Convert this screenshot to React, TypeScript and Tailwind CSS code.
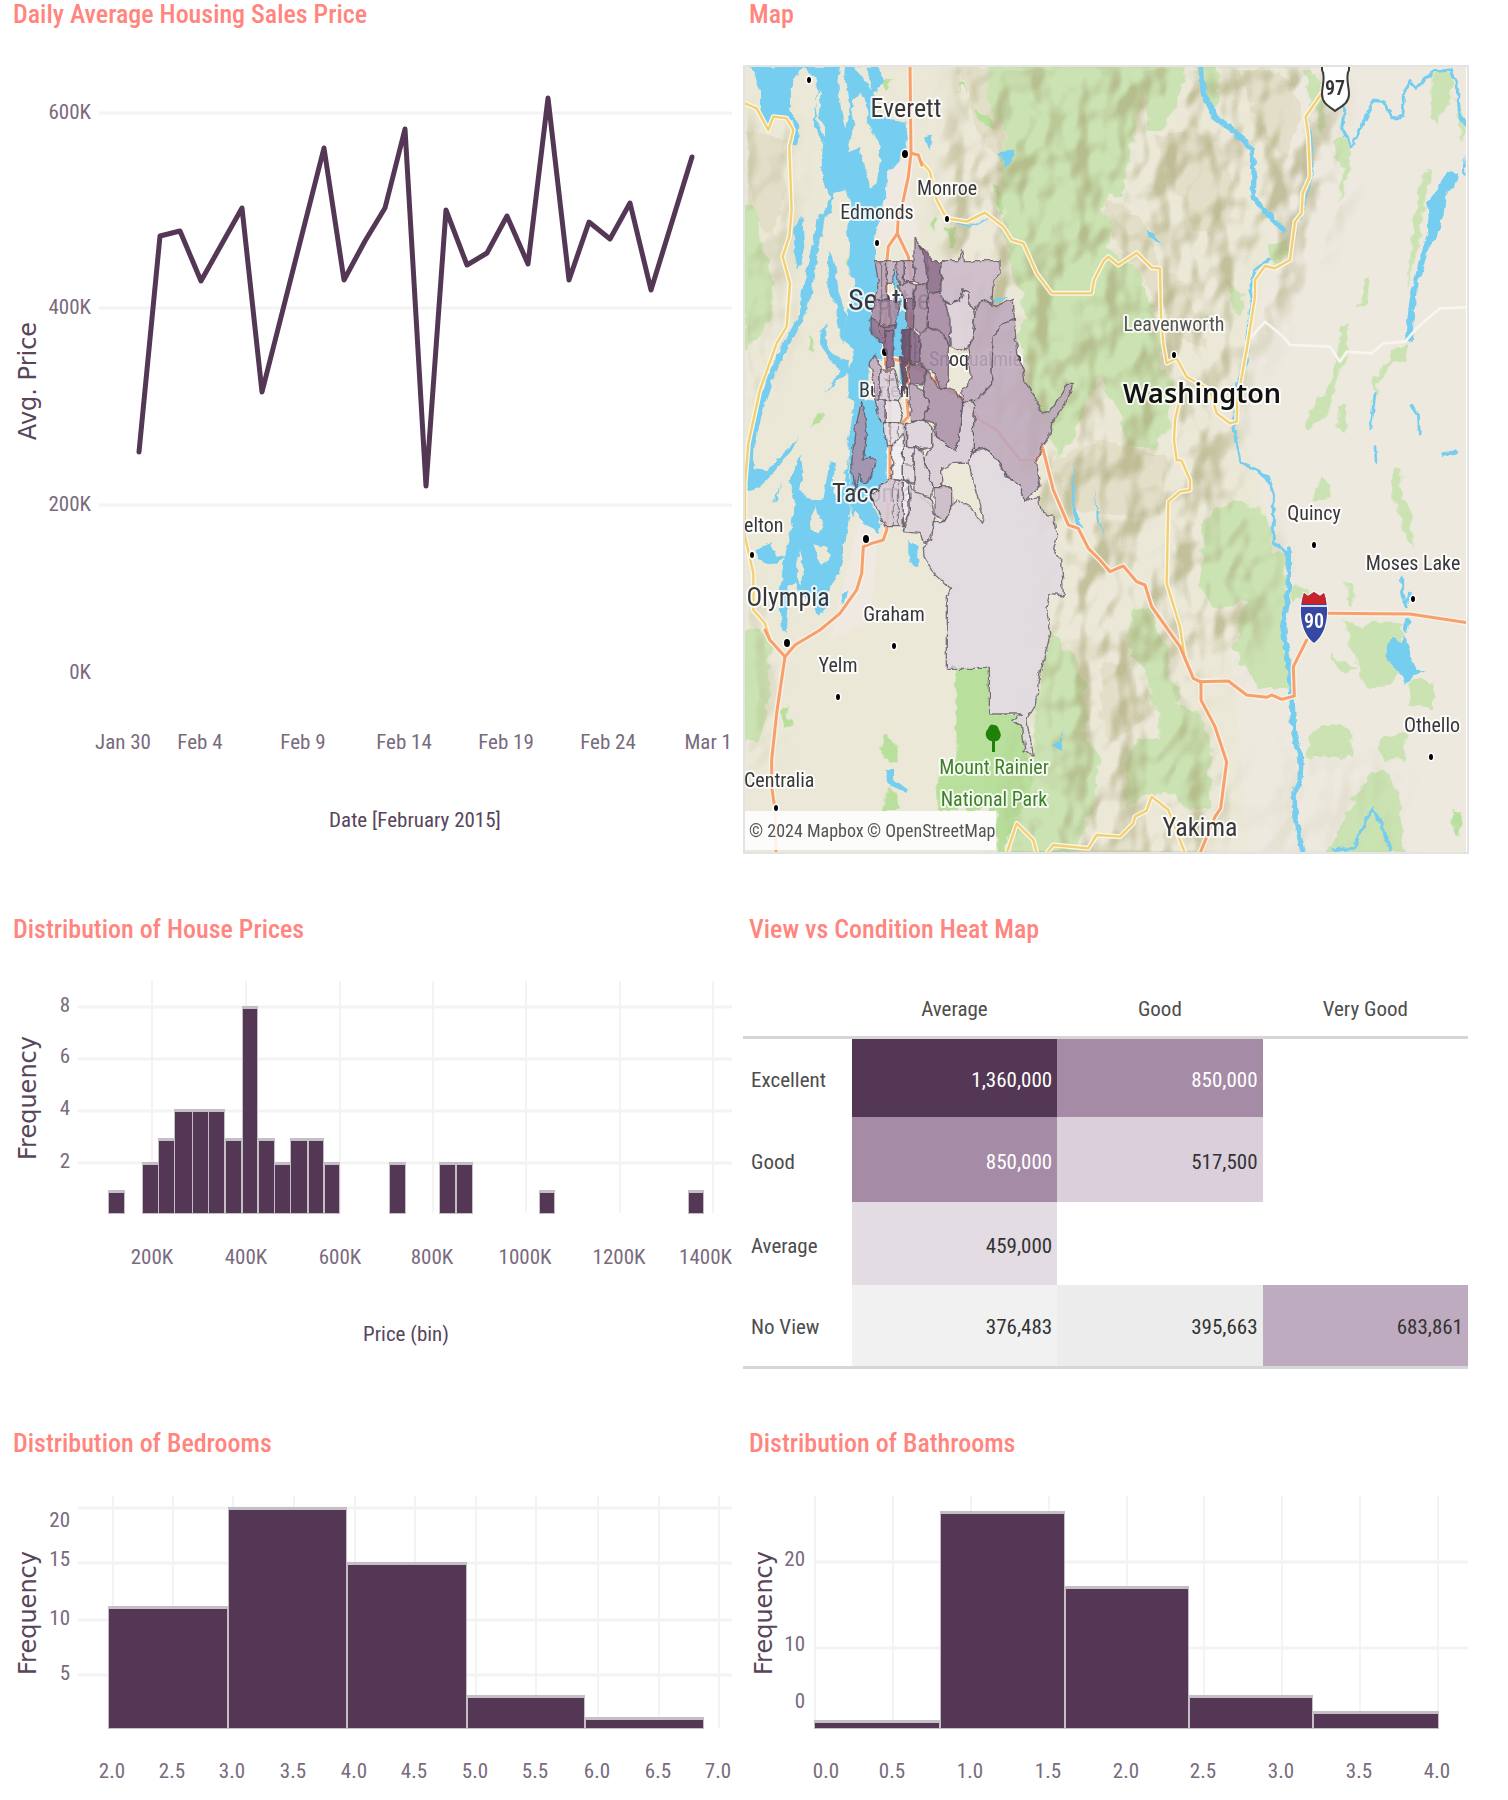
import type { ReactNode } from "react";

const LABEL = "#796a7e";
const INK = "#57465b";
const BAR = "#543754";

type Tick = { at: number; text: string; end?: boolean };

function Panel({ title, right, children }: { title: string; right?: boolean; children: ReactNode }) {
  return (
    <section className={right ? "min-w-0 pl-2" : "min-w-0 pl-0"}>
      <h2
        className={
          right
            ? "h-9 pl-[6px] text-[26px] leading-7 font-medium text-[#ff857e]"
            : "h-9 pl-[13px] text-[26px] leading-7 font-medium text-[#ff857e]"
        }
      >
        {title}
      </h2>
      {children}
    </section>
  );
}

function YTicks({ ticks, x }: { ticks: Tick[]; x: number }) {
  return (
    <g fill={LABEL} fontSize={21} textAnchor="end">
      {ticks.map((t) => (
        <text key={t.text} x={x} y={t.at + 8}>
          {t.text}
        </text>
      ))}
    </g>
  );
}

function XTicks({ ticks, y }: { ticks: Tick[]; y: number }) {
  return (
    <g fill={LABEL} fontSize={21}>
      {ticks.map((t) => (
        <text key={t.text} x={t.at} y={y + 8} textAnchor={t.end ? "end" : "middle"}>
          {t.text}
        </text>
      ))}
    </g>
  );
}

function AxisName({ x, y, text }: { x: number; y: number; text: string }) {
  return (
    <text
      transform={`translate(${x} ${y}) rotate(-90)`}
      textAnchor="middle"
      fill={INK}
      fontSize={24}
      fontFamily='"DejaVu Sans", sans-serif'
    >
      {text}
    </text>
  );
}

function Grid({ xs, ys, x0, x1, y0, y1 }: { xs: number[]; ys: number[]; x0: number; x1: number; y0: number; y1: number }) {
  return (
    <g stroke="#f3f3f3">
      {xs.map((x) => (
        <line key={`x${x}`} x1={x} x2={x} y1={y0} y2={y1} strokeWidth={2} />
      ))}
      {ys.map((y) => (
        <line key={`y${y}`} x1={x0} x2={x1} y1={y} y2={y} strokeWidth={3} />
      ))}
    </g>
  );
}

function Bars({ bars, base }: { bars: [number, number, number][]; base: number }) {
  return (
    <g>
      {bars.map(([x0, x1, top]) => (
        <g key={x0}>
          <rect x={x0} y={top} width={x1 - x0} height={base - top} fill="#c4bfc4" />
          <rect x={x0 + 1} y={top + 3} width={x1 - x0 - 2} height={base - top - 4} fill={BAR} />
        </g>
      ))}
    </g>
  );
}

const PRICE_LINE =
  "139,452 160,236 180,231 201,281 242,208 262,392 324,148 344,280 365,241 385,208 405,129 426,486 446,210 467,265 487,253 507,216 528,264 548,98 569,280 589,222 610,239 630,203 651,290 692,157";

function DailyPrice() {
  return (
    <svg viewBox="0 36 735 879" className="block h-auto w-full" role="img" aria-label="Average price by day">
      <Grid xs={[]} ys={[113, 308, 505]} x0={99} x1={732} y0={66} y1={700} />
      <polyline points={PRICE_LINE} fill="none" stroke={BAR} strokeWidth={5} strokeLinejoin="round" strokeLinecap="round" />
      <YTicks
        x={91}
        ticks={[
          { at: 111, text: "600K" },
          { at: 306, text: "400K" },
          { at: 503, text: "200K" },
          { at: 671, text: "0K" },
        ]}
      />
      <XTicks
        y={741}
        ticks={[
          { at: 123, text: "Jan 30" },
          { at: 200, text: "Feb 4" },
          { at: 303, text: "Feb 9" },
          { at: 404, text: "Feb 14" },
          { at: 506, text: "Feb 19" },
          { at: 608, text: "Feb 24" },
          { at: 732, text: "Mar 1", end: true },
        ]}
      />
      <text x={415} y={827} textAnchor="middle" fontSize={21} fill={INK}>
        Date [February 2015]
      </text>
      <AxisName x={36} y={381} text="Avg. Price" />
    </svg>
  );
}

function HousePrices() {
  const bars: [number, number, number][] = [
    [108, 125, 1190], [142, 159, 1162], [158, 175, 1138], [174, 193, 1109], [192, 209, 1109], [208, 225, 1109],
    [225, 242, 1138], [242, 258, 1006], [258, 275, 1138], [274, 291, 1162], [290, 308, 1138], [308, 324, 1138],
    [324, 340, 1162], [389, 406, 1162], [439, 456, 1162], [456, 473, 1162], [539, 555, 1190], [688, 704, 1190],
  ];
  return (
    <svg viewBox="0 951 735 478" className="block h-auto w-full" role="img" aria-label="Histogram of house prices">
      <Grid xs={[152, 246, 340, 433, 526, 620, 713]} ys={[1007, 1059, 1111, 1163]} x0={78} x1={732} y0={981} y1={1213} />
      <Bars bars={bars} base={1214} />
      <YTicks x={70} ticks={[{ at: 1004, text: "8" }, { at: 1055, text: "6" }, { at: 1107, text: "4" }, { at: 1160, text: "2" }]} />
      <XTicks
        y={1256}
        ticks={[
          { at: 152, text: "200K" },
          { at: 246, text: "400K" },
          { at: 340, text: "600K" },
          { at: 432, text: "800K" },
          { at: 525, text: "1000K" },
          { at: 619, text: "1200K" },
          { at: 732, text: "1400K", end: true },
        ]}
      />
      <text x={406} y={1341} textAnchor="middle" fontSize={21} fill={INK}>
        Price (bin)
      </text>
      <AxisName x={36} y={1098} text="Frequency" />
    </svg>
  );
}

function Bedrooms() {
  const xs = [113, 173, 233, 294, 355, 415, 476, 536, 598, 659, 719];
  return (
    <svg viewBox="0 1465 735 335" className="block h-auto w-full" role="img" aria-label="Histogram of bedrooms">
      <Grid xs={xs} ys={[1508, 1563, 1620, 1675]} x0={78} x1={732} y0={1496} y1={1728} />
      <Bars
        base={1729}
        bars={[[108, 228, 1606], [228, 347, 1507], [347, 467, 1562], [467, 585, 1695], [585, 704, 1717]]}
      />
      <YTicks x={70} ticks={[{ at: 1519, text: "20" }, { at: 1558, text: "15" }, { at: 1617, text: "10" }, { at: 1672, text: "5" }]} />
      <XTicks y={1770} ticks={xs.map((x, i) => ({ at: x - 1, text: (2 + i / 2).toFixed(1) }))} />
      <AxisName x={36} y={1613} text="Frequency" />
    </svg>
  );
}

function Bathrooms() {
  const xs = [815, 893, 971, 1049, 1127, 1204, 1282, 1360, 1438];
  return (
    <svg viewBox="743 1465 727 335" className="block h-auto w-full" role="img" aria-label="Histogram of bathrooms">
      <Grid xs={xs} ys={[1562, 1648]} x0={815} x1={1468} y0={1496} y1={1728} />
      <Bars
        base={1729}
        bars={[[814, 940, 1720], [940, 1065, 1511], [1065, 1189, 1586], [1189, 1313, 1695], [1313, 1439, 1711]]}
      />
      <YTicks x={805} ticks={[{ at: 1558, text: "20" }, { at: 1643, text: "10" }, { at: 1700, text: "0" }]} />
      <XTicks y={1770} ticks={xs.map((x, i) => ({ at: i === 0 ? 826 : x - 1, text: (i / 2).toFixed(1) }))} />
      <AxisName x={772} y={1613} text="Frequency" />
    </svg>
  );
}

type Cell = { value: string; tone: string } | null;

const HEAT: { view: string; height: string; cells: Cell[] }[] = [
  {
    view: "Excellent",
    height: "h-[80px]",
    cells: [{ value: "1,360,000", tone: "bg-[#543754] text-white" }, { value: "850,000", tone: "bg-[#a58ba5] text-white" }, null],
  },
  {
    view: "Good",
    height: "h-[85px]",
    cells: [{ value: "850,000", tone: "bg-[#a58ba5] text-white" }, { value: "517,500", tone: "bg-[#dbcfdb] text-[#333]" }, null],
  },
  {
    view: "Average",
    height: "h-[83px]",
    cells: [{ value: "459,000", tone: "bg-[#e3dce3] text-[#333]" }, null, null],
  },
  {
    view: "No View",
    height: "h-[82px]",
    cells: [
      { value: "376,483", tone: "bg-[#f1f1f1] text-[#333]" },
      { value: "395,663", tone: "bg-[#ececec] text-[#333]" },
      { value: "683,861", tone: "bg-[#bfabbf] text-[#333]" },
    ],
  },
];

function HeatMap() {
  return (
    <div className="pr-[2px]">
      <table className="w-full table-fixed border-collapse text-[21px] leading-7 text-[#4d4d4d]">
        <colgroup>
          <col className="w-[15%]" />
          <col />
          <col />
          <col />
        </colgroup>
        <thead>
          <tr className="h-[86px] border-b-3 border-[#d6d6d6]">
            <td />
            {["Average", "Good", "Very Good"].map((c) => (
              <th key={c} scope="col" className="pt-8 font-normal">
                {c}
              </th>
            ))}
          </tr>
        </thead>
        <tbody className="border-b-3 border-[#d6d6d6]">
          {HEAT.map((row) => (
            <tr key={row.view} className={row.height}>
              <th scope="row" className="pt-1 pl-2 text-left font-normal">
                {row.view}
              </th>
              {row.cells.map((cell, i) =>
                cell ? (
                  <td key={i} className={`pt-1 pr-[5px] text-right ${cell.tone}`}>
                    {cell.value}
                  </td>
                ) : (
                  <td key={i} />
                ),
              )}
            </tr>
          ))}
        </tbody>
      </table>
    </div>
  );
}

/* Forest areas, in map units. */
const FOREST = [
  "750,45 1335,45 1330,110 1270,240 1230,240 1215,120 1190,200 1165,330 1150,440 1100,430 1080,480 1120,520 1100,600 1190,650 1240,780 1270,860 1260,960 1300,1000 1290,1130 1250,1190 1170,1190 1130,1080 1080,980 1050,1030 1000,1160 950,1230 930,1130 880,1100 860,960 830,850 860,800 830,700 800,600 790,480 780,330 800,250 740,150",
  "1390,1420 1440,1370 1480,1350 1520,1360 1580,1400 1600,1500 1640,1520 1640,1670 1625,1730 1650,1920 1550,1910 1480,1790 1520,1650 1420,1680 1380,1610",
  "1175,1670 1230,1670 1250,1730 1285,1790 1285,1890 1320,1910 1320,1970 1370,1980 1410,2070 1410,2270 1350,2280 1290,2230 1210,2230 1160,2280 1160,2120 1190,2070 1260,2060 1250,1990 1210,1860 1170,1820",
  "930,1740 1000,1820 1035,1890 1040,2070 1080,2120 1060,2280 1000,2415 820,2415 780,2270 880,2100 890,1950",
  "1720,2040 1760,2020 1820,2030 1840,2050 1840,2120 1700,2120",
  "1810,1710 1870,1730 1930,1710 1990,1730 1970,1870 1960,1910 1880,1910 1860,1860 1830,1770",
  "1770,1810 1850,1860 1820,1870 1770,1820",
  "2005,1890 2080,1890 2080,1980 2010,1960",
  "1970,2050 1995,2050 1995,2140 1960,2120 1930,2140 1920,2070",
  "1760,2415 1860,2210 1900,2165 1950,2170 1980,2250 1995,2415",
  "1960,1250 1980,1260 1985,1350 2010,1370 2020,1500 1990,1430 1960,1330",
  "1745,1275 1765,1310 1760,1350 1720,1350",
  "1820,1600 1835,1610 1845,1670 1830,1670",
  "1650,1610 1700,1610 1710,1640 1650,1650",
  "10,460 50,480 60,560 100,700 90,800 60,850 10,900",
  "10,1740 60,1725 95,1790 80,1870 90,1930 60,2070 10,2080",
  "1780,270 1820,270 1830,360 1795,465 1810,360",
  "1690,60 1735,80 1745,150 1760,230 1740,250 1720,170 1700,120",
  "1810,830 1825,825 1815,930 1760,1090 1700,1140 1710,1080 1780,980",
  "1800,1070 1820,1070 1820,1150 1795,1140",
  "1870,690 1890,680 1885,760 1855,775",
  "2080,60 2140,70 2130,150 2090,225 2070,180",
  "2140,130 2178,230 2170,280",
  "2040,400 2050,360 2080,350 2060,420 2040,560 2000,720 2010,620",
  "1580,590 1640,565 1650,610 1600,650",
  "1965,900 2000,880 2000,940 1960,930 1915,1000 1895,1080 1900,1000",
  "1380,50 1430,50 1440,120 1420,200 1395,150",
  "1460,690 1510,740 1505,800 1470,760",
];

const MEADOW = [
  "648,1855 748,1855 748,1992 850,1992 870,2120 880,2200 820,2330 790,2415 767,2415 767,2280 600,2280 585,2200 650,2120",
  "85,150 125,135 120,180 80,170",
  "205,850 225,870 215,910",
  "210,1140 240,1085 255,1100 220,1130",
  "640,140 665,100 685,120 660,115",
  "700,180 740,190 770,230 720,210",
  "770,400 790,450 785,490 768,460",
  "415,2090 435,2055 480,2090 460,2140 420,2100",
  "430,2280 445,2210 470,2230 475,2280",
  "125,1990 140,1960 145,2000 158,2030 135,2030",
  "435,90 455,90 450,115 435,115",
  "570,520 585,495 592,520 580,545",
  "620,535 645,540 642,598 625,598",
  "2140,2280 2160,2290 2155,2360 2142,2350",
  "320,630 340,610 340,640 325,650",
];

const RIDGES = [
  "640,50 760,50 750,150 800,260 780,330 700,230 690,120",
  "1240,260 1350,240 1450,300 1480,420 1400,560 1350,520 1300,380",
  "1080,440 1200,500 1260,640 1330,700 1400,900 1330,860 1220,700 1120,560",
  "1500,60 1620,60 1690,180 1640,330 1560,240",
  "20,240 130,270 140,420 90,560 40,500",
  "930,1240 1080,1170 1280,1220 1260,1400 1120,1400 1010,1380",
  "1090,1830 1180,1850 1220,2000 1110,2080 1080,1990",
];

const WATER = [
  "30,50 190,50 165,90 150,130 150,180 178,230 172,285 160,290 160,230 155,210 110,200 85,240 60,180 60,120",
  "190,50 420,50 430,100 400,130 410,200 500,215 500,290 470,340 445,370 440,430 420,500 405,560 405,630 415,700 390,790 400,840 430,880 430,930 400,925 385,960 385,1010 370,1050 440,1060 440,1290 405,1340 400,1370 425,1420 420,1450 380,1430 345,1380 335,1400 330,1270 325,1180 335,1110 340,1050 325,1040 325,960 345,900 310,870 320,800 345,690 325,670 330,590 320,540 335,460 320,420 280,430 275,480 255,500 245,560 225,620 215,700 200,775 183,765 185,730 205,640 225,560 250,490 270,450 250,400 245,330 250,280 225,230 225,150 235,120 225,80 205,65",
  "265,600 285,640 295,720 320,800 310,880 290,820 290,770 262,710",
  "160,540 175,500 190,510 195,580 175,660 160,600",
  "240,850 260,820 258,890 285,920 320,930 330,960 250,1030 300,970 245,890",
  "15,1250 80,1260 110,1230 170,1170 180,1155 150,1210 110,1260 60,1310 20,1325",
  "180,1210 190,1270 180,1320 210,1350 250,1350 270,1230 285,1240 280,1320 300,1360 325,1220 332,1370 320,1450 300,1570 270,1610 265,1670 235,1700 215,1650 180,1640 165,1600 120,1630 130,1540 150,1450 165,1360 150,1300",
  "50,1500 90,1480 110,1520 140,1515 110,1545 55,1530",
  "100,1355 125,1295 110,1350",
  "130,1570 150,1590 140,1750 125,1730 120,1620",
  "305,1630 325,1620 310,1680",
  "552,262 575,255 570,300 560,290",
  "770,315 820,295 825,320 795,355 790,330",
  "505,1470 535,1490 535,1550 520,1550 505,1510",
  "440,2160 465,2160 465,2190 505,2220 495,2225 440,2200",
  "935,2085 960,2075 972,2045 965,2100",
  "1000,1230 1005,1370 1028,1430 1010,1430 995,1370",
  "1065,1310 1075,1400 1092,1460 1070,1410",
  "1220,535 1268,585 1225,560",
  "2060,460 2090,420 2120,365 2155,370 2145,410 2120,430 2110,500 2090,560 2065,600 2030,720 2015,880 1995,865 2010,740 2040,620 2065,540",
  "2175,310 2180,380 2170,370",
  "1940,1795 1955,1760 1985,1780 1995,1760 2030,1860 2060,1860 2025,1875 1995,1905 1975,1860 1945,1830",
  "1995,1710 2010,1710 2000,1750 1992,1740",
  "465,660 478,665 475,720 495,745 500,830 490,980 495,1030 480,1050 478,930 450,920 460,840",
  "760,745 810,738 765,760",
];

const ISLANDS = [
  "300,50 318,50 315,90 330,180 315,235 303,180 295,100",
  "340,150 360,130 380,160 385,220 415,280 420,330 410,400 390,415 375,350 360,290 330,310 325,280 345,230 335,190",
  "340,50 380,50 395,125 370,80",
  "225,155 240,120 245,130 235,200 255,230 255,260 235,230",
  "210,1400 225,1370 250,1420 235,1450 215,1440",
  "220,1480 262,1490 268,1530 240,1545",
  "180,1500 195,1560 180,1610 168,1560",
];

const RIVERS: [string, number][] = [
  ["240,500 225,600 210,700 190,790 140,880 95,970 65,1060 35,1180 30,1290", 18],
  ["640,515 690,530 750,500", 5],
  ["1383,45 1390,130 1425,200 1480,240 1535,295 1542,360 1540,440 1570,480 1630,540", 16],
  ["1815,175 1805,235 1835,290 1870,220 1900,150 1930,155 1955,200 1988,200 1995,120 2010,95 2030,115 2080,65 2130,60 2150,100 2160,200 2178,225", 9],
  ["1705,210 1715,280 1715,390 1690,470 1680,510", 5],
  ["1585,630 1545,660 1530,720 1538,750 1525,850 1518,940 1490,1000 1482,1130 1488,1180 1500,1235 1580,1280 1600,1330 1600,1480 1645,1510 1645,1620 1628,1730 1650,1870", 9],
  ["1645,1500 1645,1620 1628,1730 1650,1870 1655,1930 1662,2050 1683,2130 1680,2190 1662,2230 1665,2300 1690,2410", 16],
  ["1905,1030 1892,1140", 8],
  ["2015,1065 2035,1095 2038,1150", 8],
  ["1905,1190 1908,1235", 8],
  ["2110,1215 2145,1205", 12],
  ["1780,2400 1840,2395 1895,2275 1925,2320 1950,2400", 10],
  ["1985,1580 1985,1630 2000,1670 2005,1630", 9],
];

const HIGHWAYS = [
  "10,158 50,175 85,240 100,200 140,205 160,240 148,290 152,400 155,480 148,560 128,620 150,700 140,830 110,880 60,1020 25,1180 15,1300 15,1460 40,1570 40,1680 75,1720 90,1770",
  "540,330 570,365 590,450 620,505 680,515 735,488 790,530 815,570 850,580 890,670 935,730 1055,730 1062,690 1090,635 1105,620 1135,645 1190,608 1235,653 1260,655 1263,800 1270,880 1280,940 1310,925 1340,980 1410,1020 1430,1090 1470,1120 1490,1115 1492,1050 1520,900 1545,740 1545,690 1575,648 1605,655 1650,630 1665,515 1685,490 1688,430 1710,380 1705,260 1697,200 1745,130",
  "1330,1000 1305,1110 1302,1170 1310,1230 1325,1232 1350,1290 1350,1320 1320,1325 1285,1355 1280,1600 1320,1730 1335,1830",
  "800,2410 830,2320 880,2370 890,2410",
  "920,2410 940,2385 1045,2395 1070,2355 1140,2360 1180,2320 1185,2300 1220,2282 1235,2240 1285,2280 1335,2410",
];

const FREEWAYS = [
  "510,45 513,310 505,380 490,450 475,500 472,550 445,590 440,640 436,840 435,920 450,1040 450,1280 440,1440 430,1470 395,1480 370,1490 365,1570 350,1620 300,1690 240,1740 165,1785 135,1820 110,1990 95,2130 95,2210 105,2280 108,2410",
  "135,1820 90,1770 75,1740",
  "472,550 505,620 515,700 510,900 500,1040 505,1100 485,1120",
  "513,310 535,315 545,345",
  "455,925 505,940 560,970 610,1015 645,1030 685,1060 720,1110 770,1140 840,1230 890,1230 907,1190 940,1320 985,1425 1015,1435 1045,1495 1080,1530 1110,1565 1150,1548 1190,1595 1215,1605 1235,1670 1320,1790 1360,1885 1380,1895 1465,1893 1520,1935 1580,1942 1595,1935 1625,1948 1663,1938 1660,1850 1700,1770",
  "1760,1690 2010,1692 2180,1718",
  "1383,1895 1383,1950 1425,2030 1460,2135 1442,2275 1425,2300 1380,2410",
];

/* County postal areas: fill, then outline, in map units offset by (300, 540). */
const AREAS: [string, string][] = [
  ["#b79fb7", "105,92 140,92 138,160 140,210 105,210 115,160"],
  ["#c4b0c3", "140,92 168,92 160,160 138,160"],
  ["#b79fb7", "168,92 190,92 190,165 180,170 172,120"],
  ["#bda6bc", "190,92 222,92 222,155 205,155 190,165"],
  ["#b39ab2", "222,20 240,50 265,75 262,160 240,165 222,150"],
  ["#8b6a8a", "240,50 272,70 275,95 303,95 300,185 270,195 262,160 255,90"],
  ["#cbb9c9", "303,92 355,92 365,65 370,92 480,92 480,130 460,160 455,220 425,210 400,240 390,230 388,185 370,180 360,210 330,220 303,205"],
  ["#ddd0da", "315,215 330,220 360,210 368,180 388,185 390,230 405,255 395,340 370,365 335,350 325,270"],
  ["#bda7bc", "405,250 425,210 465,230 520,205 523,268 490,280 460,320 455,460 410,515 395,510 368,520 365,480 385,470 390,440 385,360 395,340"],
  ["#bda7bc", "523,268 530,370 550,420 555,460 590,510 600,540 615,550 640,530 680,460 700,460 695,485 670,530 635,580 630,615 605,650 590,700 600,770 555,815 540,770 500,735 455,670 430,655 400,665 400,600 403,515 455,460 460,320 490,280"],
  ["#d8ccd7", "368,520 395,510 403,530 400,600 400,665 385,700 340,700 305,715 305,770 280,770 250,690 275,650 275,590 290,620 345,660 355,640"],
  ["#ab90aa", "257,420 290,465 300,475 320,470 345,480 368,520 355,640 345,660 290,620 285,580 250,570 265,520 250,480"],
  ["#93728f", "205,400 255,410 255,455 240,465 210,460"],
  ["#a487a3", "265,190 300,185 315,215 330,270 330,350 300,300 265,290"],
  ["#a58aa4", "225,165 262,160 265,300 245,310 220,290"],
  ["#8b6a8a", "200,205 222,205 220,300 200,290"],
  ["#674566", "185,300 210,295 210,400 190,390 183,340"],
  ["#85638a", "210,295 240,320 240,400 210,400"],
  ["#a88da7", "240,310 265,290 310,310 325,350 325,440 320,470 300,475 285,430 260,420 240,400"],
  ["#b9a2b8", "175,170 205,155 225,165 222,205 190,205"],
  ["#a389a3", "105,210 180,215 178,240 165,285 135,290 90,265"],
  ["#8e6d8d", "90,265 135,290 165,285 160,300 135,300 132,340 120,340 90,300"],
  ["#85638a", "135,300 162,300 162,410 140,415 135,350"],
  ["#634262", "178,380 200,395 200,470 190,490 185,430"],
  ["#bfaabf", "90,400 105,375 120,410 120,505 105,510 100,440"],
  ["#d9cdd8", "120,420 165,420 180,480 175,515 120,510"],
  ["#e9e4e8", "135,510 175,515 190,550 180,575 135,575"],
  ["#cdbccc", "105,510 135,510 135,575 120,575"],
  ["#b7a0b6", "210,460 250,480 265,520 250,570 215,575 210,520"],
  ["#e4dce2", "130,575 200,580 200,650 140,650"],
  ["#ddd2dc", "200,580 250,570 275,590 275,650 245,660 200,650"],
  ["#a88ea7", "65,515 75,560 80,610 70,690 90,680 108,692 105,710 80,760 68,760 60,730 45,785 35,700 45,600"],
  ["#c9b8c8", "285,770 335,770 335,830 310,875 285,850"],
  ["#f0eef0", "155,650 190,610 190,750 155,745"],
  ["#e2d9e1", "190,650 222,650 222,760 190,750"],
  ["#dcd1db", "222,650 245,660 250,690 280,770 270,830 225,790"],
  ["#d5c8d4", "95,800 145,745 190,750 190,890 135,890"],
  ["#eee9ed", "190,750 205,760 208,840 190,890"],
  ["#dcd2db", "205,750 225,790 270,800 285,860 265,940 250,935 240,910 190,905 208,840"],
  [
    "#e0d9e0",
    "390,690 400,665 430,655 455,670 500,735 540,770 555,815 595,800 605,850 645,860 650,910 638,960 665,990 670,1095 630,1090 618,1130 632,1210 595,1350 590,1420 560,1470 580,1575 555,1565 545,1490 512,1470 545,1452 448,1452 448,1315 322,1315 322,1095 332,1075 285,1035 252,980 250,950 275,930 280,875 310,875 350,810 390,830 425,880 430,860 400,760",
  ],
];

const DOTS: [number, number, number][] = [
  [809, 80, 3], [905, 154, 4], [947, 219, 3], [877, 243, 3], [885, 352, 4], [1174, 355, 3],
  [866, 539, 4], [752, 555, 3], [787, 643, 4], [894, 646, 3], [838, 697, 3],
  [1314, 545, 3], [1413, 599, 3], [1431, 757, 3], [776, 808, 3],
];

const PLACES: { x: number; y: number; text: string; size?: number; start?: boolean; tone?: string }[] = [
  { x: 906, y: 117, text: "Everett", size: 26 },
  { x: 947, y: 195, text: "Monroe" },
  { x: 877, y: 219, text: "Edmonds" },
  { x: 848, y: 310, text: "Seattle", size: 30, start: true },
  { x: 859, y: 397, text: "Burien", start: true },
  { x: 929, y: 366, text: "Snoqualmie", start: true },
  { x: 1174, y: 331, text: "Leavenworth", tone: "#555" },
  { x: 832, y: 502, text: "Tacoma", size: 26, start: true },
  { x: 744, y: 532, text: "elton", start: true },
  { x: 788, y: 606, text: "Olympia", size: 26 },
  { x: 894, y: 621, text: "Graham" },
  { x: 838, y: 672, text: "Yelm" },
  { x: 744, y: 787, text: "Centralia", start: true },
  { x: 1314, y: 520, text: "Quincy" },
  { x: 1413, y: 570, text: "Moses Lake" },
  { x: 1432, y: 732, text: "Othello" },
  { x: 1200, y: 836, text: "Yakima", size: 26 },
  { x: 994, y: 774, text: "Mount Rainier", tone: "#3f7f2a" },
  { x: 994, y: 806, text: "National Park", tone: "#3f7f2a" },
];

function CountyMap() {
  return (
    <svg viewBox="743 36 727 879" className="block h-auto w-full" role="img" aria-label="Map of sales by postal area">
      <defs>
        <clipPath id="frame">
          <rect x={744} y={67} width={722} height={785} />
        </clipPath>
        <filter id="relief" x="0" y="0" width="100%" height="100%" colorInterpolationFilters="sRGB">
          <feTurbulence type="fractalNoise" baseFrequency="0.024 0.017" numOctaves={3} seed={7} />
          <feGaussianBlur stdDeviation={2} />
          <feDiffuseLighting surfaceScale={20} lightingColor="#fff">
            <feDistantLight azimuth={215} elevation={50} />
          </feDiffuseLighting>
          <feColorMatrix values="0 0 0 0 .66  0 0 0 0 .65  0 0 0 0 .46  -1.6 0 0 0 1.35" />
        </filter>
        <filter id="soft" x="-20%" y="-20%" width="140%" height="140%">
          <feGaussianBlur stdDeviation={14} />
        </filter>
        <filter id="rough" x="0" y="0" width="100%" height="100%">
          <feTurbulence type="fractalNoise" baseFrequency="0.09" numOctaves={2} seed={3} result="n" />
          <feDisplacementMap in="SourceGraphic" in2="n" scale={12} xChannelSelector="R" yChannelSelector="G" />
        </filter>
        <filter id="border" x="-5%" y="-5%" width="110%" height="110%">
          <feTurbulence type="fractalNoise" baseFrequency="0.12" numOctaves={2} seed={5} result="n" />
          <feDisplacementMap in="SourceGraphic" in2="n" scale={6} xChannelSelector="R" yChannelSelector="G" />
        </filter>
        <mask id="mountains">
          <g filter="url(#soft)">
            <path d="M960 60H1330L1340 200 1290 300 1240 380 1230 480 1280 560 1260 640 1190 700 1230 800 1200 860H1000L1040 700 1060 560 960 330 940 200Z" fill="#fff" />
            <path d="M740 120H790V330L740 420ZM740 600H770V760H740Z" fill="#aaa" />
            <path d="M1330 760H1400V860H1240L1270 740Z" fill="#333" />
          </g>
        </mask>
      </defs>
      <g clipPath="url(#frame)">
        <rect x={743} y={65} width={727} height={790} fill="#ebe8d8" />
        <path d="M1300 60H1470V860H1250L1230 640 1280 560 1240 420Z" fill="#ede9df" />
        <path d="M870 165L905 160 920 240H880ZM862 510L880 520 870 620 830 640Z" fill="#efe9e2" />
        <g filter="url(#rough)">
          <g transform="translate(740 50) scale(.33333)">
            {RIDGES.map((p) => (
              <polygon key={p} points={p} fill="#dedac2" opacity={0.7} />
            ))}
            {FOREST.map((p) => (
              <polygon key={p} points={p} fill="#cbe3b3" />
            ))}
            {MEADOW.map((p) => (
              <polygon key={p} points={p} fill="#b8df9c" />
            ))}
          </g>
        </g>
        <g mask="url(#mountains)">
          <rect x={743} y={65} width={727} height={790} filter="url(#relief)" opacity={0.6} />
        </g>
        <g filter="url(#border)">
          <g transform="translate(740 50) scale(.33333)" fill="none" strokeLinejoin="round" strokeLinecap="round">
            {WATER.map((p) => (
              <polygon key={p} points={p} fill="#74cef0" />
            ))}
            {RIVERS.map(([p, w]) => (
              <polyline key={p} points={p} stroke="#74cef0" strokeWidth={w} />
            ))}
            {ISLANDS.map((p) => (
              <polygon key={p} points={p} fill="#ebe8d8" />
            ))}
          </g>
        </g>
        <g transform="translate(740 50) scale(.33333)" fill="none" strokeLinejoin="round" strokeLinecap="round">
          <polyline
            points="1530,865 1575,815 1630,860 1650,885 1770,890 1800,935 1820,905 1895,910 1930,880 1995,875 2035,830 2100,775 2180,772"
            stroke="#f8f5f0"
            strokeWidth={8}
          />
          {HIGHWAYS.map((p) => (
            <polyline key={p} points={p} stroke="#fbf6e6" strokeWidth={15} />
          ))}
          {FREEWAYS.map((p) => (
            <polyline key={p} points={p} stroke="#fbf1e6" strokeWidth={17} />
          ))}
          {HIGHWAYS.map((p) => (
            <polyline key={p} points={p} stroke="#f2cf73" strokeWidth={7} />
          ))}
          {FREEWAYS.map((p) => (
            <polyline key={p} points={p} stroke="#f6a06c" strokeWidth={9} />
          ))}
        </g>

        {DOTS.map(([x, y, r]) => (
          <ellipse key={`${x}-${y}`} cx={x} cy={y} rx={r - 1} ry={r} fill="#000" stroke="#fff" strokeWidth={3} paintOrder="stroke" />
        ))}
        <g stroke="#ffffff" strokeOpacity={0.8} strokeWidth={4} strokeLinejoin="round" paintOrder="stroke">
          {PLACES.map((p) => (
            <text key={p.text} x={p.x} y={p.y} fontSize={p.size ?? 20} fill={p.tone ?? "#38383c"} textAnchor={p.start ? "start" : "middle"}>
              {p.text}
            </text>
          ))}
          <text x={1202} y={403} fontSize={27} fontWeight={600} fill="#111" textAnchor="middle" fontFamily='"Noto Sans", sans-serif'>
            Washington
          </text>
        </g>

        <g filter="url(#border)">
          <g transform="translate(840 230) scale(.33333)" stroke="#5f5560" strokeWidth={4} strokeLinejoin="round">
            {AREAS.map(([fill, points]) => (
              <polygon key={points} points={points} fill={fill} fillOpacity={0.88} strokeOpacity={0.8} />
            ))}
            <path
              d="M125 92V210M165 120V215M120 210L122 330M150 215V285M225 300V400M148 420V510M135 450H165M150 580V650M190 705H222M175 580V620M160 745V890M175 750V890M195 580V650"
              fill="none"
              strokeWidth={3}
              strokeOpacity={0.7}
            />
          </g>
        </g>

        <path
          d="M1322 60V70C1326 76 1322 86 1322 94C1322 104 1330 107 1335 111C1340 107 1349 104 1349 94C1349 86 1345 76 1349 70V60Z"
          fill="#fff"
          stroke="#3b3b3b"
          strokeWidth={2}
        />
        <text x={1335} y={95} fontSize={20} fontWeight={600} fill="#333" textAnchor="middle">
          97
        </text>
        <path
          d="M1304 593L1308 596 1314 592 1320 596 1324 593C1328 604 1328 616 1325 626C1323 634 1318 640 1314 643C1310 640 1305 634 1303 626C1300 616 1300 604 1304 593Z"
          fill="#3648a2"
          stroke="#fff"
          strokeOpacity={0.8}
          strokeWidth={2}
          paintOrder="stroke"
        />
        <path d="M1304 593L1308 596 1314 592 1320 596 1324 593Q1326 598 1326 604H1302Q1302 598 1304 593Z" fill="#c9242b" />
        <path d="M1301 606H1327" stroke="#d9dcef" strokeWidth={2} />
        <text x={1314} y={628} fontSize={20} fontWeight={600} fill="#fff" textAnchor="middle">
          90
        </text>
        <path
          d="M992 740H995V752H992ZM986 736Q985 731 988 729Q990 723 994 725Q998 725 999 730Q1002 734 1000 738Q998 742 994 741Q988 742 986 736Z"
          fill="#1f8109"
        />
        <rect x={745} y={811} width={251} height={39} fill="#fff" fillOpacity={0.86} />
        <g fontSize={18} fill="#555">
          <text x={749} y={837}>© 2024 Mapbox</text>
          <text x={867} y={837}>© OpenStreetMap</text>
        </g>
      </g>
      <rect x={744} y={66} width={724} height={787} fill="none" stroke="#e3e3e3" strokeWidth={2} />
    </svg>
  );
}

export default function App() {
  return (
    <main className="grid grid-cols-2 overflow-hidden bg-white pr-[38px] font-['Roboto_Condensed','Roboto',sans-serif]">
      <Panel title="Daily Average Housing Sales Price">
        <DailyPrice />
      </Panel>
      <Panel title="Map" right>
        <CountyMap />
      </Panel>
      <Panel title="Distribution of House Prices">
        <HousePrices />
      </Panel>
      <Panel title="View vs Condition Heat Map" right>
        <HeatMap />
      </Panel>
      <Panel title="Distribution of Bedrooms">
        <Bedrooms />
      </Panel>
      <Panel title="Distribution of Bathrooms" right>
        <Bathrooms />
      </Panel>
    </main>
  );
}
